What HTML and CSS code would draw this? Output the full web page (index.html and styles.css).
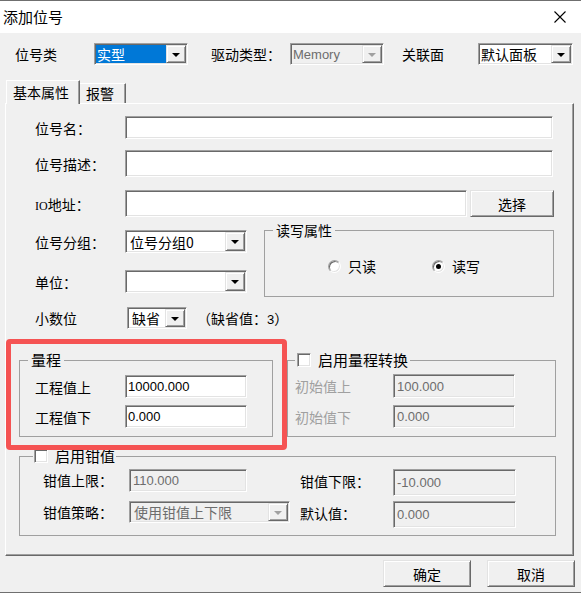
FILE: index.html
```html
<!DOCTYPE html>
<html lang="zh-CN">
  <head>
    <meta charset="UTF-8" />
    <meta name="viewport" content="width=device-width, initial-scale=1.0" />
    <title>添加位号</title>
    <link rel="stylesheet" href="styles.css">
  </head>
  <body>
    <div class="dialog">
      <div class="titlebar">
        <span class="title">添加位号</span>
        <svg class="close" width="12" height="12" viewBox="0 0 12 12">
          <path d="M0.5 0.5L11.5 11.5M11.5 0.5L0.5 11.5" stroke="#000" stroke-width="1.1" fill="none" />
        </svg>
      </div>

      <div class="topbar">
        <span class="lbl lbl-kind">位号类</span>
        <div class="combo combo-kind"><span class="combo-text selected">实型</span><span class="combo-btn"></span></div>
        <span class="lbl lbl-driver">驱动类型：</span>
        <div class="combo combo-driver disabled"><span class="combo-text latin">Memory</span><span class="combo-btn"></span></div>
        <span class="lbl lbl-panel">关联面</span>
        <div class="combo combo-panel"><span class="combo-text">默认面板</span><span class="combo-btn"></span></div>
      </div>

      <div class="tabs">
        <div class="tab tab-active">基本属性</div>
        <div class="tab tab-alarm">报警</div>
      </div>

      <div class="panel">
        <div class="row row-name">
          <span class="row-label">位号名：</span>
          <div class="field field-wide"></div>
        </div>
        <div class="row row-desc">
          <span class="row-label">位号描述：</span>
          <div class="field field-wide"></div>
        </div>
        <div class="row row-io">
          <span class="row-label"><span class="io">IO</span>地址：</span>
          <div class="field field-io"></div>
          <div class="btn btn-pick">选择</div>
        </div>

        <div class="row row-split">
          <div class="col-left">
            <div class="sub-row">
              <span class="row-label">位号分组：</span>
              <div class="combo combo-field"><span class="combo-text">位号分组0</span><span class="combo-btn"></span></div>
            </div>
            <div class="sub-row sub-row-unit">
              <span class="row-label">单位：</span>
              <div class="combo combo-field"><span class="combo-text"></span><span class="combo-btn"></span></div>
            </div>
          </div>
          <fieldset class="group group-rw">
            <legend class="group-title">读写属性</legend>
            <div class="radios">
              <label class="radio-item radio-ro"><span class="radio"></span>只读</label>
              <label class="radio-item"><span class="radio checked"></span>读写</label>
            </div>
          </fieldset>
        </div>

        <div class="row row-decimal">
          <span class="row-label row-label-short">小数位</span>
          <div class="combo combo-decimal"><span class="combo-text">缺省</span><span class="combo-btn"></span></div>
          <span class="hint">（缺省值：<span class="digit">3</span>）</span>
        </div>

        <div class="row-range">
          <fieldset class="group group-range">
            <legend class="group-title group-title-big">量程</legend>
            <div class="pair-row">
              <span class="pair-label">工程值上</span>
              <div class="field field-num"><span class="num">10000.000</span></div>
            </div>
            <div class="pair-row">
              <span class="pair-label">工程值下</span>
              <div class="field field-num"><span class="num">0.000</span></div>
            </div>
          </fieldset>

          <fieldset class="group group-convert">
            <legend class="group-title group-title-check"><span class="check"></span>启用量程转换</legend>
            <div class="pair-row">
              <span class="pair-label muted">初始值上</span>
              <div class="field field-num off"><span class="num">100.000</span></div>
            </div>
            <div class="pair-row">
              <span class="pair-label muted">初始值下</span>
              <div class="field field-num off"><span class="num">0.000</span></div>
            </div>
          </fieldset>
        </div>

        <fieldset class="group group-clamp">
          <legend class="group-title group-title-check clamp-title"><span class="check"></span>启用钳值</legend>
          <div class="clamp-grid">
            <span class="clamp-label">钳值上限：</span>
            <div class="field off clamp-high"><span class="num">110.000</span></div>
            <span class="clamp-label clamp-label-right">钳值下限：</span>
            <div class="field off clamp-right"><span class="num">-10.000</span></div>

            <span class="clamp-label clamp-label-low">钳值策略：</span>
            <div class="combo disabled clamp-policy"><span class="combo-text">使用钳值上下限</span><span class="combo-btn"></span></div>
            <span class="clamp-label clamp-label-right">默认值：</span>
            <div class="field off clamp-right"><span class="num">0.000</span></div>
          </div>
        </fieldset>

        <!-- highlight frame drawn over the range group -->
        <div class="highlight"></div>
      </div>

      <div class="footer">
        <div class="btn btn-footer">确定</div>
        <div class="btn btn-footer">取消</div>
      </div>
    </div>
  </body>
</html>
```

FILE: styles.css
```css
* {
  box-sizing: border-box;
}
body {
  margin: 0;
  background: #f0f0f0;
  font-family: "Noto Sans CJK SC", sans-serif;
  font-size: 14px;
  color: #000;
}
.dialog {
  width: 581px;
  height: 593px;
  background: #f0f0f0;
  border-top: 1px solid #6f6f6f;
  border-bottom: 1px solid #6f6f6f;
  display: flex;
  flex-direction: column;
  overflow: hidden;
}

/* title bar */
.titlebar {
  height: 32px;
  flex-shrink: 0;
  background: #fff;
  display: flex;
  align-items: center;
  justify-content: space-between;
  padding: 0 15px 0 3px;
}
.title {
  font-size: 15px;
  line-height: 20px;
}
.close {
  display: block;
}

/* top row with the three selectors */
.topbar {
  display: flex;
  align-items: center;
  height: 22px;
  margin-top: 10px;
  padding-left: 15px;
  flex-shrink: 0;
}
.lbl {
  line-height: 22px;
  white-space: nowrap;
}
.lbl-kind {
  width: 79px;
}
.lbl-driver {
  width: 79px;
  margin-left: 23px;
}
.lbl-panel {
  width: 76px;
  margin-left: 18px;
}
.combo-kind,
.combo-driver {
  width: 94px;
  height: 22px;
}
.combo-panel {
  width: 95px;
  height: 22px;
}

/* sunken controls */
.field,
.combo,
.check {
  background: #fff;
  border: 1px solid;
  border-color: #a0a0a0 #fff #fff #a0a0a0;
  box-shadow: inset 1px 1px 0 #696969, inset -1px -1px 0 #e3e3e3;
}
.field {
  display: flex;
  align-items: center;
  padding-left: 2px;
}
.field.off {
  background: #f0f0f0;
  color: #6d6d6d;
  padding-left: 3px;
}
.num,
.latin,
.digit {
  font-family: "Liberation Sans", Arial, sans-serif;
  font-size: 13px;
}
.combo {
  display: flex;
  padding: 1px;
}
.combo-text {
  flex: 1;
  display: flex;
  align-items: center;
  padding-left: 1px;
  white-space: nowrap;
  overflow: hidden;
}
.combo-text.selected {
  background: #0078d7;
  color: #fff;
}
.combo-btn {
  width: 20px;
  flex-shrink: 0;
  display: flex;
  align-items: center;
  justify-content: center;
  background: #f0f0f0;
  border: 1px solid;
  border-color: #e3e3e3 #696969 #696969 #e3e3e3;
  box-shadow: inset 1px 1px 0 #fff, inset -1px -1px 0 #a0a0a0;
}
.combo-btn::after {
  content: "";
  border-left: 4px solid transparent;
  border-right: 4px solid transparent;
  border-top: 4px solid #000;
  margin-top: 1px;
}
.combo.disabled {
  background: #f0f0f0;
}
.combo.disabled .combo-text {
  color: #6d6d6d;
}
.combo.disabled .combo-btn::after {
  border-top-color: #a0a0a0;
}

/* raised buttons */
.btn {
  display: flex;
  align-items: center;
  justify-content: center;
  background: #f0f0f0;
  border: 1px solid;
  border-color: #e3e3e3 #696969 #696969 #e3e3e3;
  box-shadow: inset 1px 1px 0 #fff, inset -1px -1px 0 #a0a0a0;
  line-height: 20px;
}

/* tabs */
.tabs {
  display: flex;
  align-items: flex-end;
  height: 23px;
  margin-top: 15px;
  padding-left: 6px;
  flex-shrink: 0;
  position: relative;
  z-index: 1;
}
.tab {
  background: #f0f0f0;
  border-top: 1px solid #fff;
  border-left: 1px solid #fff;
  border-right: 1px solid #696969;
  box-shadow: inset -1px 0 0 #a0a0a0;
  padding-left: 6px;
}
.tab-active {
  width: 74px;
  height: 24px;
  margin-bottom: -1px;
  line-height: 22px;
}
.tab-alarm {
  width: 46px;
  height: 20px;
  line-height: 19px;
  border-left: none;
}

/* tab page */
.panel {
  margin-left: 5px;
  width: 569px;
  height: 453px;
  flex-shrink: 0;
  border-top: 1px solid #fff;
  border-left: 1px solid #fff;
  border-right: 1px solid #696969;
  border-bottom: 1px solid #696969;
  box-shadow: inset -1px -1px 0 #a0a0a0;
  padding-left: 13px;
  position: relative;
}
.row {
  display: flex;
  align-items: center;
  padding-left: 16px;
}
.row-label {
  width: 90px;
  flex-shrink: 0;
  white-space: nowrap;
}
.io {
  font-family: "Liberation Serif", serif;
  font-size: 12px;
}
.row-name {
  margin-top: 12px;
  height: 23px;
}
.row-desc {
  margin-top: 11px;
  height: 27px;
}
.row-io {
  margin-top: 13px;
  height: 27px;
}
.field-wide {
  width: 428px;
  height: 100%;
}
.field-io {
  width: 342px;
  height: 100%;
}
.btn-pick {
  width: 84px;
  height: 27px;
  margin-left: 3px;
}

.row-split {
  margin-top: 13px;
  align-items: flex-start;
}
.col-left {
  width: 212px;
}
.sub-row {
  display: flex;
  align-items: center;
  height: 23px;
}
.sub-row-unit {
  margin-top: 17px;
}
.combo-field {
  width: 122px;
  height: 23px;
}
.combo-field .combo-text {
  padding-left: 3px;
}

/* group boxes */
.group {
  margin: 0;
  padding: 0;
  min-width: 0;
  border: 1px solid #a0a0a0;
}
.group-title {
  margin-left: 8px;
  padding: 0 3px;
  height: 16px;
  line-height: 16px;
  display: flex;
  align-items: center;
  white-space: nowrap;
}
.group-title-big {
  font-size: 15px;
}
.group-title-check {
  font-size: 15px;
  padding: 0 2px;
}
.check {
  width: 14px;
  height: 14px;
  margin-right: 7px;
  flex-shrink: 0;
}

.group-rw {
  width: 290px;
  margin-left: 17px;
  margin-top: -8px;
  padding: 18px 0 20px;
}
.radios {
  display: flex;
  align-items: center;
  height: 20px;
  padding-left: 63px;
}
.radio-item {
  display: flex;
  align-items: center;
  gap: 7px;
}
.radio-ro {
  width: 104px;
}
.radio {
  position: relative;
  width: 13px;
  height: 13px;
  border-radius: 50%;
  background: #fff;
  border: 1px solid;
  border-color: #a0a0a0 #fff #fff #a0a0a0;
  box-shadow: inset 1px 1px 0 #696969, inset -1px -1px 0 #e3e3e3;
}
.radio.checked::after {
  content: "";
  position: absolute;
  left: 3px;
  top: 3px;
  width: 5px;
  height: 5px;
  border-radius: 50%;
  background: #000;
}

.row-decimal {
  margin-top: 10px;
  height: 22px;
}
.row-label-short {
  width: 92px;
}
.combo-decimal {
  width: 60px;
  height: 22px;
}
.combo-decimal .combo-text {
  padding-left: 3px;
}
.hint {
  margin-left: 10px;
  white-space: nowrap;
}

.row-range {
  display: flex;
  align-items: flex-start;
  margin-top: 23px;
}
/* legends sit at the padding edge, so pull them back by the padding */
.group-range {
  width: 254px;
  padding: 7px 0 8px 15px;
}
.group-range .group-title {
  margin-left: -7px;
}
.group-convert {
  width: 269px;
  margin-left: 14px;
  padding: 6px 0 8px 7px;
}
.group-convert .group-title {
  margin-left: 0;
}
.pair-row {
  display: flex;
  align-items: center;
  height: 23px;
}
.pair-row + .pair-row {
  margin-top: 7px;
}
.group-convert .pair-row:first-of-type {
  height: 24px;
}
.group-range .pair-label {
  width: 90px;
}
.group-convert .pair-label {
  width: 98px;
}
.muted {
  color: #a0a0a0;
}
.field-num {
  width: 122px;
  height: 100%;
}

.group-clamp {
  width: 537px;
  margin-top: 11px;
  padding: 5px 0 7px 23px;
}
.group-clamp .clamp-title {
  margin-left: -10px;
  padding: 0 1px;
}
.clamp-grid {
  display: grid;
  grid-template-columns: 86px 161px 103px 123px;
  grid-template-rows: 27px 27px;
  row-gap: 5px;
  align-items: start;
}
.clamp-label {
  line-height: 23px;
  white-space: nowrap;
}
.clamp-label-right {
  margin-left: 10px;
  line-height: 25px;
}
.clamp-label-low {
  line-height: 22px;
}
.clamp-high {
  width: 118px;
  height: 23px;
}
.clamp-right {
  height: 27px;
}
.clamp-policy {
  height: 22px;
}
.clamp-policy .combo-text {
  padding-left: 3px;
}

/* red frame painted over the range group */
.highlight {
  position: absolute;
  left: 0;
  top: 235px;
  width: 281px;
  height: 111px;
  border: 5px solid #f55353;
  border-radius: 4px;
  pointer-events: none;
}

/* bottom buttons */
.footer {
  flex: 1;
  display: flex;
  justify-content: flex-end;
  align-items: flex-start;
  gap: 16px;
  padding: 4px 6px 0 0;
}
.btn-footer {
  width: 88px;
  height: 27px;
}
```
